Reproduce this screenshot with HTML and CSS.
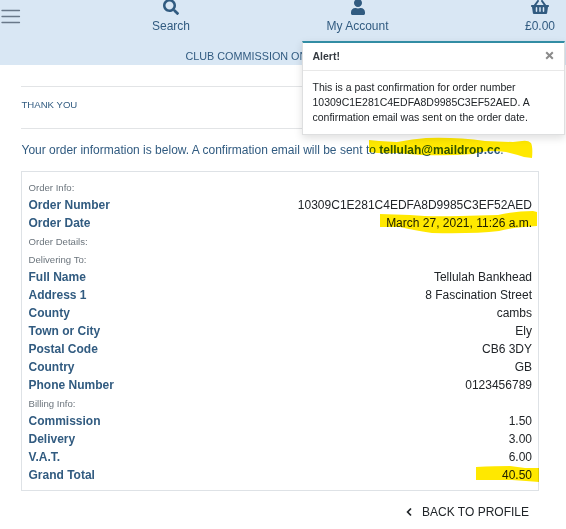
FILE: index.html
```html
<!DOCTYPE html>
<html lang="en">
<head>
<meta charset="utf-8">
<title>Thank you</title>
<link rel="stylesheet" href="styles.css">
</head>
<body>
<header class="header">
  <div class="nav">
    <svg class="burger" width="20" height="16" viewBox="0 0 20 16"><path d="M1 1.500h17.500M1 7.500h17.500M1 13.500h17.500" stroke="#697889" stroke-width="1.300" stroke-linecap="round"/></svg>
    <a class="nav-item search"><svg width="16" height="16" viewBox="0 0 512 512"><path fill="currentColor" d="M505 442.700 405.300 343c-4.500-4.500-10.600-7-17-7H372c27.600-35.300 44-79.700 44-128C416 93.100 322.900 0 208 0S0 93.100 0 208s93.100 208 208 208c48.300 0 92.700-16.400 128-44v16.300c0 6.400 2.500 12.500 7 17l99.700 99.700c9.400 9.400 24.600 9.400 33.900 0l28.300-28.300c9.400-9.400 9.400-24.600.1-34zM208 336c-70.700 0-128-57.200-128-128 0-70.700 57.200-128 128-128 70.700 0 128 57.200 128 128 0 70.700-57.200 128-128 128z"/></svg><span>Search</span></a>
    <a class="nav-item account"><svg width="14" height="16" viewBox="0 0 448 512"><path fill="currentColor" d="M224 256c70.700 0 128-57.300 128-128S294.700 0 224 0 96 57.300 96 128s57.300 128 128 128zm89.600 32h-16.700c-22.200 10.200-46.900 16-72.900 16s-50.600-5.800-72.900-16h-16.700C60.200 288 0 348.200 0 422.400V464c0 26.500 21.500 48 48 48h352c26.500 0 48-21.500 48-48v-41.600c0-74.200-60.200-134.400-134.400-134.400z"/></svg><span>My Account</span></a>
    <a class="nav-item basket"><svg width="18" height="16" viewBox="0 0 576 512"><path fill="currentColor" d="M576 216v16c0 13.255-10.745 24-24 24h-8l-26.113 182.788C514.509 462.435 494.257 480 470.370 480H105.630c-23.887 0-44.139-17.565-47.518-41.212L32 256h-8c-13.255 0-24-10.745-24-24v-16c0-13.255 10.745-24 24-24h67.341l106.780-146.821c10.395-14.292 30.407-17.453 44.701-7.058 14.293 10.395 17.453 30.408 7.058 44.701L170.477 192h235.046L326.120 82.821c-10.395-14.292-7.234-34.306 7.059-44.701 14.291-10.395 34.306-7.235 44.701 7.058L484.659 192H552c13.255 0 24 10.745 24 24zM312 392V280c0-13.255-10.745-24-24-24s-24 10.745-24 24v112c0 13.255 10.745 24 24 24s24-10.745 24-24zm112 0V280c0-13.255-10.745-24-24-24s-24 10.745-24 24v112c0 13.255 10.745 24 24 24s24-10.745 24-24zm-224 0V280c0-13.255-10.745-24-24-24s-24 10.745-24 24v112c0 13.255 10.745 24 24 24s24-10.745 24-24z"/></svg><span>£0.00</span></a>
  </div>
  <div class="banner">CLUB COMMISSION ON</div>
</header>

<main class="content">
  <h1 class="title">THANK YOU</h1>
  <p class="intro">Your order information is below. A confirmation email will be sent <span class="marked">to <strong>tellulah@maildrop.cc</strong>.<svg class="marker marker-email" width="166" height="22" viewBox="0 0 166 22"><path d="M2 3 12 4 30 5 Q46 2 59 1 Q90 0 118 4 L146 5 155 4 Q161 3 164 6 Q166 10 165 21 L157 20 Q148 17 139 15 Q120 12 106 17 Q80 19 54 18 L29 16 Q14 17 2 15Z"/></svg></span></p>

  <section class="order">
    <div class="row group">Order Info:</div>
    <div class="row"><strong>Order Number</strong><span>10309C1E281C4EDFA8D9985C3EF52AED</span></div>
    <div class="row"><strong>Order Date</strong><span class="marked">March 27, 2021, 11:26 a.m.<svg class="marker marker-date" width="157" height="23" viewBox="0 0 157 23"><path d="M0 3 30 4 Q50 6 80 5 L118 4 Q136 0 153 0 L157 1 157 15 144 16 Q131 17 119 20 Q94 23 52 22 Q32 19 20 16 L0 16Z"/></svg></span></div>
    <div class="row group">Order Details:</div>
    <div class="row group">Delivering To:</div>
    <div class="row"><strong>Full Name</strong><span>Tellulah Bankhead</span></div>
    <div class="row"><strong>Address 1</strong><span>8 Fascination Street</span></div>
    <div class="row"><strong>County</strong><span>cambs</span></div>
    <div class="row"><strong>Town or City</strong><span>Ely</span></div>
    <div class="row"><strong>Postal Code</strong><span>CB6 3DY</span></div>
    <div class="row"><strong>Country</strong><span>GB</span></div>
    <div class="row"><strong>Phone Number</strong><span>0123456789</span></div>
    <div class="row group">Billing Info:</div>
    <div class="row"><strong>Commission</strong><span>1.50</span></div>
    <div class="row"><strong>Delivery</strong><span>3.00</span></div>
    <div class="row"><strong>V.A.T.</strong><span>6.00</span></div>
    <div class="row"><strong>Grand Total</strong><span class="marked">40.50<svg class="marker marker-total" width="63" height="16" viewBox="0 0 63 16"><path d="M0 1 Q20 0 34 0 L49 2 63 2 63 16 50 15 36 14 0 14Z"/></svg></span></div>
  </section>
  <a class="back"><svg width="6" height="10" viewBox="0 0 6 10"><path d="M5 1.500 1.600 5 5 8.500" fill="none" stroke="currentColor" stroke-width="1.700"/></svg><span>BACK TO PROFILE</span></a>
</main>

<aside class="toast">
  <div class="toast-head"><strong>Alert!</strong><svg width="9" height="9" viewBox="0 0 9 9"><path d="m1.200 1.200 6.600 6.600m0-6.600L1.200 7.800" stroke="#8b8b8b" stroke-width="2"/></svg></div>
  <p class="toast-body">This is a past confirmation for order number 10309C1E281C4EDFA8D9985C3EF52AED. A confirmation email was sent on the order date.</p>
</aside>
</body>
</html>
```
FILE: styles.css
```css
* { box-sizing: border-box; }
body {
  margin: 0;
  height: 529px;
  overflow: hidden;
  position: relative;
  background: #fff;
  color: #212529;
  font: 12px/18px "Liberation Sans", Arial, sans-serif;
}
svg { display: block; }
.header { height: 65px; background: #d9e7f4; color: #315b80; }
.nav {
  display: grid;
  grid-template-columns: 77px 188px 185px 116px;
  height: 47px;
}
.burger { margin: 9px 0 0 1px; }
.nav-item { display: flex; flex-direction: column; align-items: center; margin-top: -1px; }
.nav-item span { margin-top: 2px; }
.basket { padding-left: 64px; }
.banner { padding-left: 185.5px; font-size: 10.8px; line-height: 18px; white-space: nowrap; }
.content { width: 518px; margin: 21px 0 0 21px; }
.title {
  margin: 0;
  height: 43px;
  border-top: 1px solid #e2e4e6;
  border-bottom: 1px solid #e2e4e6;
  color: #315b80;
  font-size: 9.6px;
  font-weight: 400;
  line-height: 35px;
  padding-left: 0.5px;
}
.intro { margin: 12px 0; padding-left: 0.5px; color: #315b80; white-space: nowrap; }
.order { height: 320px; padding: 6px 6px 6px 6.5px; border: 1px solid #dee2e6; }
.row { display: flex; justify-content: space-between; height: 18px; }
.row strong { color: #315b80; }
.group { color: #6c757d; font-size: 9.6px; line-height: 19px; }
.marked { position: relative; }
.marker { position: absolute; fill: #ffe800; mix-blend-mode: multiply; }
.marker-email { left: 1.5px; top: -6px; }
.marker-date { right: -5px; top: -3px; }
.marker-total { right: -7px; top: 0; }
.back { display: flex; justify-content: flex-end; align-items: center; gap: 10px; margin-top: 12px; padding-right: 10px; }
.toast {
  position: absolute;
  left: 302px;
  top: 41px;
  width: 263px;
  height: 94px;
  border: 1px solid #dedfe0;
  border-top: 2px solid #328da4;
  background: #fff;
  box-shadow: 0 3px 8px rgba(0, 0, 0, .13);
  font-size: 10.5px;
}
.toast-head {
  display: flex;
  justify-content: space-between;
  align-items: center;
  height: 28px;
  padding: 0 10px 2px 9.5px;
  border-bottom: 1px solid #e8e8e8;
  color: #343a40;
}
.toast-body { margin: 9px 9px 9px 9.5px; line-height: 15px; }
```
